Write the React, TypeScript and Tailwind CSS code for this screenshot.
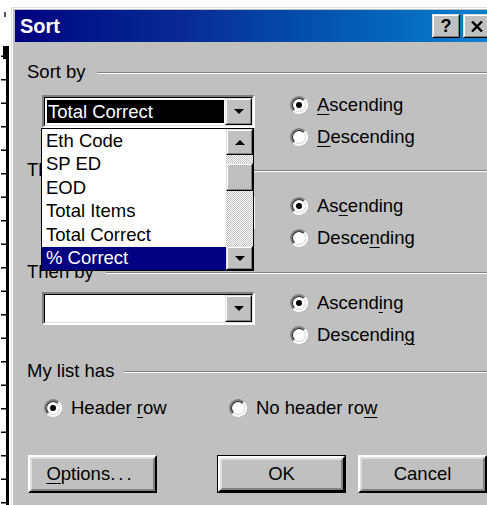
import React from "react";

// Classic 3D bevels
function Raised({
  className = "",
  children,
}: {
  className?: string;
  children?: React.ReactNode;
}) {
  return (
    <div
      className={`border border-t-[#dfdfdf] border-l-[#dfdfdf] border-r-black border-b-black ${className}`}
    >
      <div className="w-full h-full border border-t-white border-l-white border-r-[#808080] border-b-[#808080] bg-[#c0c0c0] flex items-center justify-center">
        {children}
      </div>
    </div>
  );
}

function PushButton({
  children,
  isDefault = false,
  className = "",
}: {
  children: React.ReactNode;
  isDefault?: boolean;
  className?: string;
}) {
  const face = (
    <div className="w-full h-full border-2 border-t-white border-l-white border-r-black border-b-black">
      <div className="w-full h-full border-2 border-t-[#dfdfdf] border-l-[#dfdfdf] border-r-[#808080] border-b-[#808080] bg-[#c0c0c0] flex items-center justify-center">
        {children}
      </div>
    </div>
  );
  return (
    <div
      className={`w-[129px] h-[38px] ${isDefault ? "border border-black" : ""} ${className}`}
    >
      {face}
    </div>
  );
}

function ArrowDown() {
  return (
    <svg width="10" height="5" viewBox="0 0 10 5">
      <polygon points="0,0 10,0 5,5" fill="#000" />
    </svg>
  );
}

function ArrowUp() {
  return (
    <svg width="10" height="5" viewBox="0 0 10 5">
      <polygon points="0,5 10,5 5,0" fill="#000" />
    </svg>
  );
}

function Radio({ checked = false }: { checked?: boolean }) {
  return (
    <div className="w-[18px] h-[18px] shrink-0 rounded-full border-2 border-t-[#808080] border-l-[#808080] border-r-white border-b-white">
      <div className="w-full h-full rounded-full border border-t-[#202020] border-l-[#202020] border-r-[#dfdfdf] border-b-[#dfdfdf] bg-white flex items-center justify-center">
        {checked && <div className="w-[6px] h-[6px] rounded-full bg-black" />}
      </div>
    </div>
  );
}

function U({ children }: { children: React.ReactNode }) {
  return (
    <span className="underline decoration-1 underline-offset-[3px]">
      {children}
    </span>
  );
}

function Etched({ className = "" }: { className?: string }) {
  return (
    <div className={`flex-1 flex flex-col mt-[2px] ${className}`}>
      <div className="h-px bg-[#808080]" />
      <div className="h-px bg-white" />
    </div>
  );
}

function GroupLabel({
  title,
  className = "",
  lineClass = "",
}: {
  title: string;
  className?: string;
  lineClass?: string;
}) {
  return (
    <div className={`flex items-center h-[24px] ${className}`}>
      <span className="whitespace-nowrap">{title}</span>
      <Etched className={lineClass} />
    </div>
  );
}

function Combo({
  value,
  className = "",
}: {
  value?: string;
  className?: string;
}) {
  return (
    <div
      className={`h-[33px] border-2 border-t-[#808080] border-l-[#808080] border-r-white border-b-white ${className}`}
    >
      <div className="h-full border border-t-black border-l-black border-r-[#dfdfdf] border-b-[#dfdfdf] bg-white flex">
        <div className="flex-1 p-[2px] pr-[1px]">
          {value && (
            <div className="h-full bg-black text-white flex items-center pl-px whitespace-nowrap">
              {value}
            </div>
          )}
        </div>
        <Raised className="w-[27px] h-full">
          <ArrowDown />
        </Raised>
      </div>
    </div>
  );
}

function RadioItem({
  checked = false,
  children,
}: {
  checked?: boolean;
  children: React.ReactNode;
}) {
  return (
    <div className="h-[32px] flex items-center gap-[9px] whitespace-nowrap">
      <Radio checked={checked} />
      <span>{children}</span>
    </div>
  );
}

function SortGroup({
  comboValue,
  rowClass,
  comboClass,
  asc,
  desc,
}: {
  comboValue?: string;
  rowClass: string;
  comboClass: string;
  asc: React.ReactNode;
  desc: React.ReactNode;
}) {
  return (
    <div className={`flex ${rowClass}`}>
      <div className="ml-[15px] w-[213px] shrink-0">
        <Combo value={comboValue} className={comboClass} />
      </div>
      <div className="ml-[35px] flex flex-col">
        <RadioItem checked>{asc}</RadioItem>
        <RadioItem>{desc}</RadioItem>
      </div>
    </div>
  );
}

// Edge of the worksheet grid peeking out on the left
function SheetEdge() {
  const ticks: number[] = [];
  for (let y = 55.5; y < 505; y += 23.5) ticks.push(y);
  return (
    <svg width="11" height="505" className="shrink-0" viewBox="0 0 11 505">
      <rect x="4" y="12" width="2" height="5" fill="#555" />
      <rect x="6" y="46" width="3" height="459" fill="#000" />
      <rect x="3" y="46" width="4" height="13" fill="#000" />
      {ticks.map((y) => (
        <rect key={y} x="1" y={y} width="6" height="1.5" fill="#000" />
      ))}
    </svg>
  );
}

function TitleBar() {
  return (
    <div className="h-[32px] flex items-center pl-[5px] pr-[10px] bg-gradient-to-r from-[#000080] via-[#0a2a96] via-35% to-[#1084d0]">
      <span className="text-white font-bold text-[20px] leading-none">
        Sort
      </span>
      <div className="flex-1" />
      <Raised className="w-[28px] h-[24px]">
        <span className="font-bold text-[18px] leading-none">?</span>
      </Raised>
      <Raised className="w-[28px] h-[24px] ml-[3px]">
        <svg width="12" height="11" viewBox="0 0 12 11">
          <path
            d="M1 0.5 L11 10.5 M11 0.5 L1 10.5"
            stroke="#000"
            strokeWidth="2.4"
          />
        </svg>
      </Raised>
    </div>
  );
}

function DropList() {
  const items = [
    "Eth Code",
    "SP ED",
    "EOD",
    "Total Items",
    "Total Correct",
    "% Correct",
  ];
  return (
    <div className="absolute left-[41px] top-[128px] w-[213px] h-[143px] border border-black bg-white flex">
      <div className="flex-1 flex flex-col">
        {items.map((it, i) => (
          <div
            key={it}
            className={`h-[23.5px] pl-[4px] flex items-center whitespace-nowrap ${
              i === items.length - 1 ? "bg-[#000080] text-white" : ""
            }`}
          >
            {it}
          </div>
        ))}
      </div>
      <div className="w-[27px] flex flex-col">
        <Raised className="h-[26px]">
          <ArrowUp />
        </Raised>
        <div className="h-[8px] bg-[repeating-conic-gradient(#c0c0c0_0_25%,#ffffff_0_50%)] bg-[length:2px_2px]" />
        <Raised className="h-[28px]" />
        <div className="flex-1 bg-[repeating-conic-gradient(#c0c0c0_0_25%,#ffffff_0_50%)] bg-[length:2px_2px]" />
        <Raised className="h-[24px]">
          <ArrowDown />
        </Raised>
      </div>
    </div>
  );
}

function Body() {
  return (
    <div className="flex flex-col pl-[12px]">
      <GroupLabel title="Sort by" className="mt-[18px]" lineClass="ml-[11px]" />
      <SortGroup
        comboValue="Total Correct"
        rowClass="mt-[5px]"
        comboClass="mt-[6px]"
        asc={
          <>
            <U>A</U>scending
          </>
        }
        desc={
          <>
            <U>D</U>escending
          </>
        }
      />

      <GroupLabel title="Then by" className="mt-[5px]" lineClass="ml-[12px]" />
      <SortGroup
        rowClass="mt-[8px]"
        comboClass="mt-[6px]"
        asc={
          <>
            As<U>c</U>ending
          </>
        }
        desc={
          <>
            Desce<U>n</U>ding
          </>
        }
      />

      <GroupLabel title="Then by" className="mt-[6px]" lineClass="ml-[12px]" />
      <SortGroup
        rowClass="mt-[3px]"
        comboClass="mt-[5px]"
        asc={
          <>
            Ascend<U>i</U>ng
          </>
        }
        desc={
          <>
            Descendin<U>g</U>
          </>
        }
      />

      <GroupLabel
        title="My list has"
        className="mt-[8px]"
        lineClass="ml-[10px]"
      />
      <div className="flex mt-[9px] ml-[17px]">
        <div className="w-[185px] shrink-0">
          <RadioItem checked>
            Header <U>r</U>ow
          </RadioItem>
        </div>
        <RadioItem>
          No header ro<U>w</U>
        </RadioItem>
      </div>

      <div className="flex mt-[31px] ml-[1px]">
        <PushButton>
          <span className="pr-[4px]">
            <U>O</U>ptions<span className="tracking-[3px]">...</span>
          </span>
        </PushButton>
        <PushButton isDefault className="ml-[60px]">
          OK
        </PushButton>
        <PushButton className="ml-[12px] shrink-0">Cancel</PushButton>
      </div>
    </div>
  );
}

export default function App() {
  return (
    <div className="relative w-[487px] h-[505px] overflow-hidden bg-white flex font-['Liberation_Sans',Arial,sans-serif] text-[18.5px] leading-[24px] text-black">
      <SheetEdge />
      <div className="mt-[7px] w-[490px] shrink-0 border-t border-l border-[#dfdfdf]">
        <div className="h-full border-t border-l border-white">
          <div className="h-full pt-px pl-[2px] bg-[#c0c0c0]">
            <TitleBar />
            <Body />
          </div>
        </div>
      </div>
      <DropList />
    </div>
  );
}
